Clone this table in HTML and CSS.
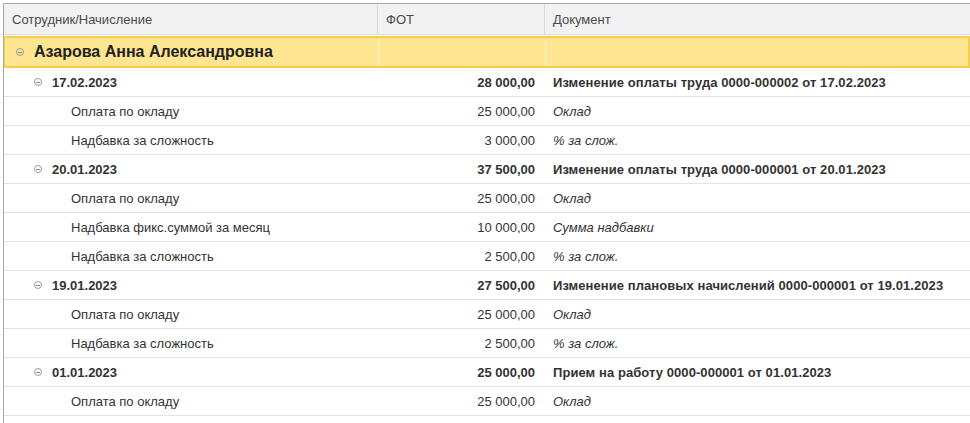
FILE: index.html
```html
<!DOCTYPE html>
<html lang="ru">
<head>
<meta charset="utf-8">
<link rel="stylesheet" href="styles.css">
</head>
<body>
<div class="frame">
  <div class="row head">
    <div class="c c1">Сотрудник/Начисление</div>
    <div class="c c2">ФОТ</div>
    <div class="c c3">Документ</div>
  </div>
  <div class="row group">
    <div class="c c1"><span class="tog"></span>Азарова Анна Александровна</div>
    <div class="c c2"></div>
    <div class="c c3"></div>
  </div>

  <div class="row date">
    <div class="c c1"><span class="tog"></span>17.02.2023</div>
    <div class="c c2 num">28 000,00</div>
    <div class="c c3">Изменение оплаты труда 0000-000002 от 17.02.2023</div>
  </div>
  <div class="row item">
    <div class="c c1">Оплата по окладу</div>
    <div class="c c2 num">25 000,00</div>
    <div class="c c3">Оклад</div>
  </div>
  <div class="row item">
    <div class="c c1">Надбавка за сложность</div>
    <div class="c c2 num">3 000,00</div>
    <div class="c c3">% за слож.</div>
  </div>

  <div class="row date">
    <div class="c c1"><span class="tog"></span>20.01.2023</div>
    <div class="c c2 num">37 500,00</div>
    <div class="c c3">Изменение оплаты труда 0000-000001 от 20.01.2023</div>
  </div>
  <div class="row item">
    <div class="c c1">Оплата по окладу</div>
    <div class="c c2 num">25 000,00</div>
    <div class="c c3">Оклад</div>
  </div>
  <div class="row item">
    <div class="c c1">Надбавка фикс.суммой за месяц</div>
    <div class="c c2 num">10 000,00</div>
    <div class="c c3">Сумма надбавки</div>
  </div>
  <div class="row item">
    <div class="c c1">Надбавка за сложность</div>
    <div class="c c2 num">2 500,00</div>
    <div class="c c3">% за слож.</div>
  </div>

  <div class="row date">
    <div class="c c1"><span class="tog"></span>19.01.2023</div>
    <div class="c c2 num">27 500,00</div>
    <div class="c c3">Изменение плановых начислений 0000-000001 от 19.01.2023</div>
  </div>
  <div class="row item">
    <div class="c c1">Оплата по окладу</div>
    <div class="c c2 num">25 000,00</div>
    <div class="c c3">Оклад</div>
  </div>
  <div class="row item">
    <div class="c c1">Надбавка за сложность</div>
    <div class="c c2 num">2 500,00</div>
    <div class="c c3">% за слож.</div>
  </div>

  <div class="row date">
    <div class="c c1"><span class="tog"></span>01.01.2023</div>
    <div class="c c2 num">25 000,00</div>
    <div class="c c3">Прием на работу 0000-000001 от 01.01.2023</div>
  </div>
  <div class="row item">
    <div class="c c1">Оплата по окладу</div>
    <div class="c c2 num">25 000,00</div>
    <div class="c c3">Оклад</div>
  </div>
</div>
</body>
</html>
```

FILE: styles.css
```css
* { box-sizing: border-box; }
html, body { margin: 0; padding: 0; background: #fff; }
body {
  font-family: "Liberation Sans", Arial, sans-serif;
  font-size: 13px;
  color: #333;
  padding: 3px 0 0 3px;
}
.frame {
  border-top: 1px solid #a8a8a8;
  border-left: 1px solid #a8a8a8;
  width: 967px;
  height: 420px;
  overflow: hidden;
}
.row {
  display: grid;
  grid-template-columns: 373px 167px 1fr;
  height: 29px;
  border-bottom: 1px solid #e4e4e4;
}
.c {
  display: flex;
  align-items: center;
  white-space: nowrap;
  overflow: hidden;
}
.head {
  height: 31px;
  background: #f2f2f2;
  border-bottom: 1px solid #dcdcdc;
  color: #4a4a4a;
}
.head .c1 { padding-left: 8px; }
.head .c2 { padding-left: 8px; border-left: 1px solid #d9d9d9; }
.head .c3 { padding-left: 8px; border-left: 1px solid #d9d9d9; }
.group {
  height: 32px;
  background: #fde591;
  border: 2px solid #f6cf4a;
  border-left-width: 1px;
  margin-top: 1px;
}
.group .c1 {
  padding-left: 11px;
  font-size: 16px;
  font-weight: bold;
  color: #222;
}
.group .c1 .tog { margin-right: 10px; }
.group .c2, .group .c3 { border-left: 1px solid #fff3cc; }
.tog {
  display: inline-block;
  width: 8px;
  height: 8px;
  border: 1px solid #9a9a9a;
  border-radius: 50%;
  position: relative;
  flex: none;
}
.tog::after {
  content: "";
  position: absolute;
  left: 1px;
  right: 1px;
  top: 2.5px;
  height: 1px;
  background: #8a8a8a;
}
.date { font-weight: bold; color: #333; }
.date .c3 { letter-spacing: 0.07px; }
.date .c1 { padding-left: 30px; }
.date .c1 .tog { margin-right: 10px; }
.item .c1 { padding-left: 67px; }
.num { justify-content: flex-end; padding-right: 9px; }
.c3 { padding-left: 9px; }
.item .c3 { font-style: italic; }
```
